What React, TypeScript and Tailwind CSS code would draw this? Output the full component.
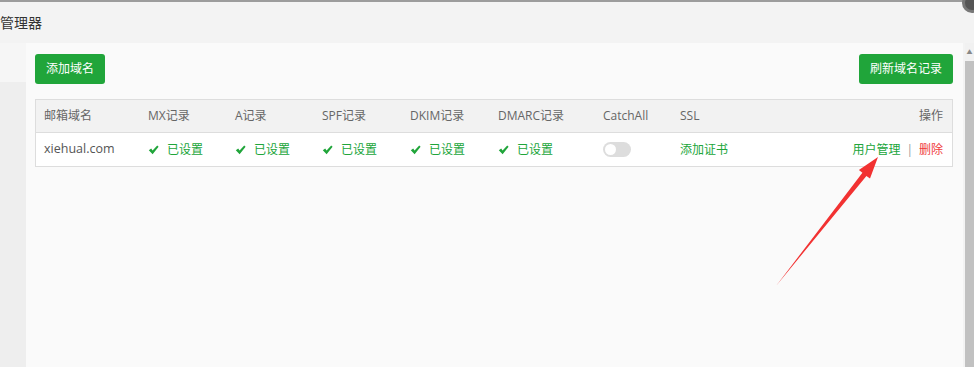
import React from "react";

const font = { fontFamily: '"Open Sans", "Noto Sans CJK SC", sans-serif' };

function Check() {
  return (
    <span className="flex items-center gap-[8px] text-[#20a53a]">
      <svg width="11" height="10" viewBox="0 0 11 10">
        <path d="M0.8 5.2 L3.2 3.6 L4.6 5.6 L9.2 0.6 L10.6 1.8 L4.6 9.2 Z" fill="#20a53a" />
      </svg>
      <span>已设置</span>
    </span>
  );
}

export default function App() {
  const cols = "grid grid-cols-[104px_87px_87px_88px_88px_105px_77px_1fr_auto]";
  return (
    <div className="relative w-[974px] h-[367px] overflow-hidden bg-[#f3f3f3] text-[12px]" style={font}>
      <div className="h-[2px] bg-[#9c9c9c]" />
      <div className="h-[41px] flex items-center text-[14px] text-[#333]">管理器</div>
      <div className="flex h-[324px]">
        <div className="w-[26px] flex flex-col">
          <div className="h-[39px] bg-[#f6f6f6]" />
          <div className="flex-1 bg-[#eeeeee]" />
        </div>
        <div className="w-[937px] bg-[#fafafa] pt-[11px] pl-[9px] pr-[10px]">
          <div className="flex justify-between">
            <button className="h-[30px] px-[11px] rounded-[3px] bg-[#20a53a] text-white text-[12px]">添加域名</button>
            <button className="h-[30px] px-[11px] rounded-[3px] bg-[#20a53a] text-white text-[12px]">刷新域名记录</button>
          </div>
          <div className="mt-[15px] border border-[#dddddd]">
            <div className={`${cols} h-[33px] items-center bg-[#f2f2f2] text-[#666] border-b border-[#dddddd]`}>
              <div className="pl-[8px]">邮箱域名</div>
              <div className="pl-[8px]">MX记录</div>
              <div className="pl-[8px]">A记录</div>
              <div className="pl-[8px]">SPF记录</div>
              <div className="pl-[8px]">DKIM记录</div>
              <div className="pl-[8px]">DMARC记录</div>
              <div className="pl-[8px]">CatchAll</div>
              <div className="pl-[8px]">SSL</div>
              <div className="pr-[9px] text-right">操作</div>
            </div>
            <div className={`${cols} h-[33px] items-center bg-white text-[#555]`}>
              <div className="pl-[8px] text-[12.5px]">xiehual.com</div>
              <div className="pl-[8px]"><Check /></div>
              <div className="pl-[8px]"><Check /></div>
              <div className="pl-[8px]"><Check /></div>
              <div className="pl-[8px]"><Check /></div>
              <div className="pl-[8px]"><Check /></div>
              <div className="pl-[8px]">
                <div className="w-[28px] h-[15px] rounded-full bg-[#dddddd] flex items-center px-[2px]">
                  <div className="w-[11px] h-[11px] rounded-full bg-white" />
                </div>
              </div>
              <div className="pl-[8px] text-[#20a53a]">添加证书</div>
              <div className="pr-[9px] flex items-center gap-[6px]">
                <span className="text-[#20a53a]">用户管理</span>
                <span className="text-[#999]">|</span>
                <span className="text-[#ef3b3b]">删除</span>
              </div>
            </div>
          </div>
        </div>
        <div className="w-[2px] bg-[#f3f3f3]" />
        <div className="w-[9px] flex flex-col bg-[#f1f1f1]">
          <div className="h-[18px] flex items-center justify-center text-[6px] text-[#888]">▲</div>
          <div className="flex-1 bg-[#c1c1c1]" />
        </div>
      </div>
      <div className="absolute right-[-8px] top-[-7px] w-[20px] h-[20px] rounded-full bg-[#555] border-[3px] border-[#777]" />
      <svg className="absolute left-0 top-0" width="974" height="367" viewBox="0 0 974 367">
        <polygon points="878,157 870,178.6 866.4,175.9 776,286 862.4,172.8 858.9,170" fill="#f23232" />
      </svg>
    </div>
  );
}
